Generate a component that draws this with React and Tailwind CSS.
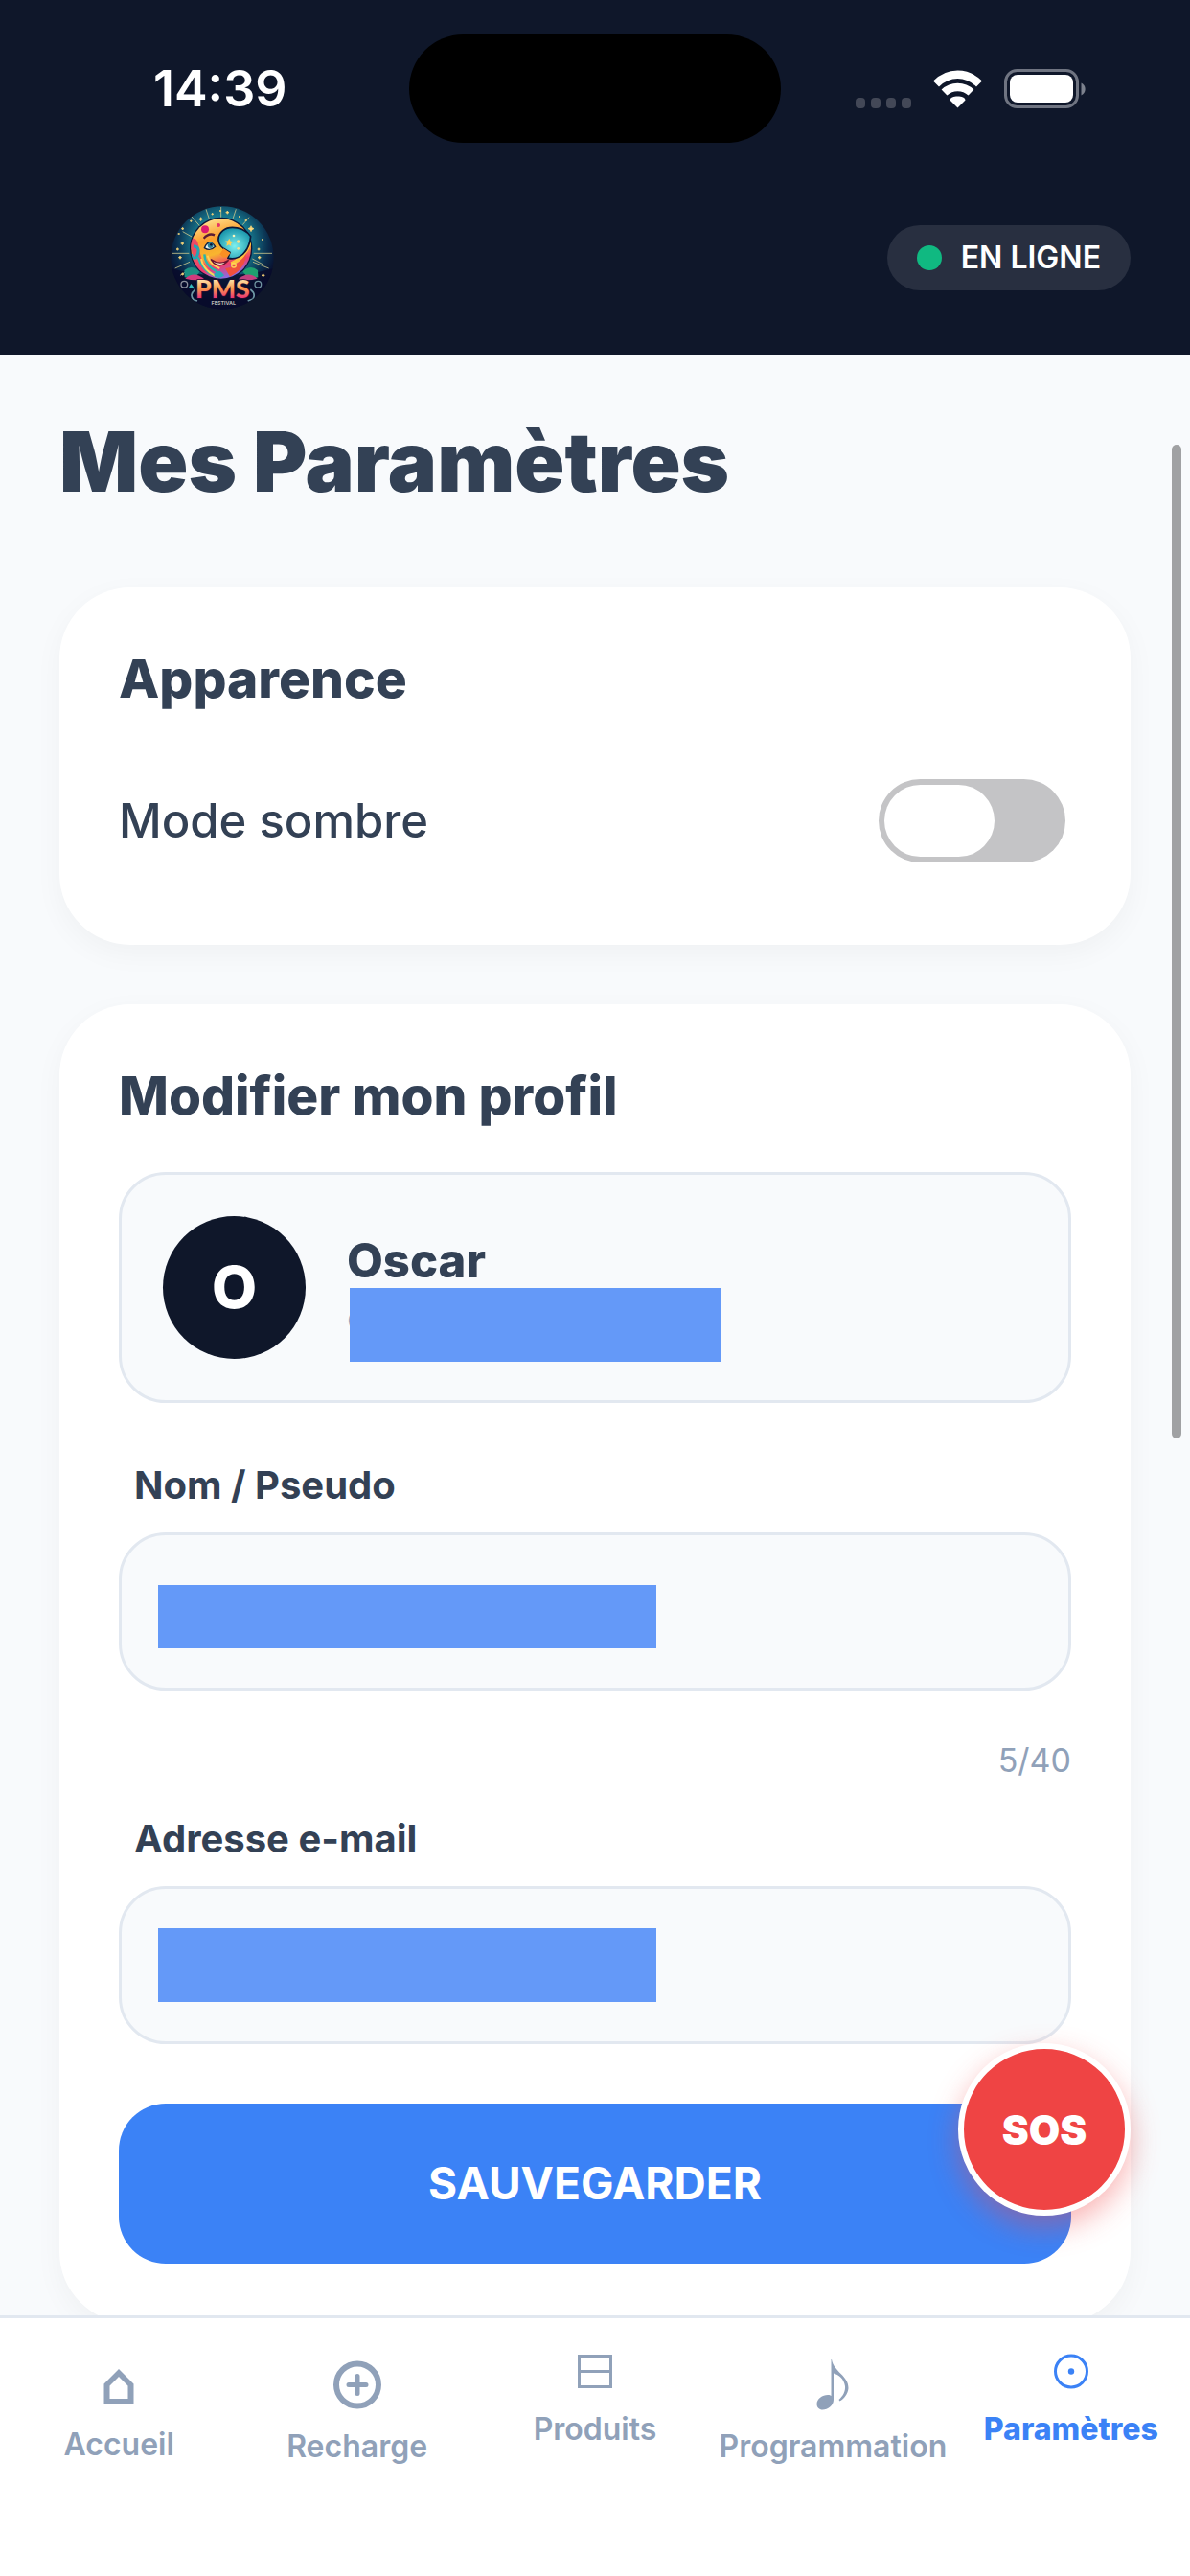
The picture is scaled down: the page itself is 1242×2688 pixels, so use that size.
import { useState } from "react";

function Wifi() {
  return (
    <svg className="h-[40px] w-[53px]" viewBox="0 0 53 40" fill="none" aria-hidden="true">
      <path d="M4 14.500 C17 1.500 36 1.500 49 14.500" stroke="white" strokeWidth="8.500" />
      <path d="M12.500 23.500 C20.500 16 32.500 16 40.500 23.500" stroke="white" strokeWidth="8.500" />
      <path d="M26.500 39.500 L18.500 31.500 C18.500 26 34.500 26 34.500 31.500 Z" fill="white" />
    </svg>
  );
}

function Battery() {
  return (
    <svg className="h-[42px] w-[86px]" viewBox="0 0 86 42" fill="none" aria-hidden="true">
      <rect x="1.500" y="1.500" width="75" height="38" rx="12" stroke="#6f7481" strokeWidth="3" />
      <rect x="6" y="6" width="66" height="29" rx="8" fill="white" />
      <path d="M80.500 14.500 C86 17 86 25 80.500 27.500 Z" fill="#7c818d" />
    </svg>
  );
}

const STARS = [
  [149, 86, 6], [232, 65, 5], [306, 116, 9], [91, 162, 5], [92, 116, 4], [185, 70, 3],
  [270, 78, 3], [290, 90, 3], [342, 150, 3], [84, 206, 5], [344, 262, 5], [80, 132, 3],
  [118, 92, 3], [332, 206, 5], [92, 258, 4], [210, 60, 3], [330, 180, 4], [76, 180, 4],
];

function Logo() {
  return (
    <svg className="h-[108px] w-[108px]" viewBox="54 45 324 324" role="img" aria-label="PMS Festival">
      <defs>
        <radialGradient id="sky" cx="0.5" cy="0.36" r="0.56">
          <stop offset="0" stopColor="#2fc4cf" />
          <stop offset="0.5" stopColor="#167389" />
          <stop offset="0.8" stopColor="#0a2c4c" />
          <stop offset="1" stopColor="#080c2b" />
        </radialGradient>
        <linearGradient id="moon" x1="0.2" y1="0" x2="0.5" y2="1">
          <stop offset="0" stopColor="#ffe79a" />
          <stop offset="0.35" stopColor="#fb9e2c" />
          <stop offset="0.6" stopColor="#f8b52f" />
          <stop offset="0.8" stopColor="#ef3d6b" />
          <stop offset="1" stopColor="#8b6be0" />
        </linearGradient>
        <radialGradient id="glow" cx="0.5" cy="0.6" r="0.6">
          <stop offset="0" stopColor="#7df0ee" />
          <stop offset="1" stopColor="#1591a8" />
        </radialGradient>
        <linearGradient id="letters" x1="0" y1="0" x2="0" y2="1">
          <stop offset="0.15" stopColor="#fff0bd" />
          <stop offset="0.5" stopColor="#fb9a4b" />
          <stop offset="0.85" stopColor="#e9287c" />
        </linearGradient>
        <clipPath id="disc"><circle cx="216" cy="207" r="161" /></clipPath>
        <clipPath id="face"><circle cx="212" cy="178" r="95" /></clipPath>
      </defs>
      <g clipPath="url(#disc)">
        <rect x="54" y="45" width="324" height="324" fill="url(#sky)" />
        <path d="M54 240 Q216 285 378 240 V369 H54 Z" fill="#080c2b" opacity="0.85" />
        <g stroke="#c9c58c" strokeWidth="2.500">
          <path d="M60 193 H112 M314 193 H372 M212 48 V84 M165 55 L176 88 M259 55 L248 88 M92 125 L122 142 M120 78 L146 108 M300 80 L280 104 M68 240 L114 220 M362 240 L312 220 M84 262 L120 240 M344 228 L310 210" />
        </g>
        {STARS.map(([x, y, r]) => (
          <path
            key={`${x}-${y}`}
            d={`M${x} ${y - r} L${x + r / 3} ${y - r / 3} L${x + r} ${y} L${x + r / 3} ${y + r / 3} L${x} ${y + r} L${x - r / 3} ${y + r / 3} L${x - r} ${y} L${x - r / 3} ${y - r / 3} Z`}
            fill="#ffd97a"
            stroke="#ffd97a"
            strokeWidth="2"
          />
        ))}
        <path d="M97 246 Q120 226 146 250 Q132 276 98 268 Z" fill="#1b8f83" />
        <path d="M100 272 Q128 246 160 274 Q130 280 100 272 Z" fill="#d03a7d" />
        <path d="M327 246 Q304 226 280 250 Q296 276 328 268 Z" fill="#1fa06f" />
        <path d="M326 272 Q298 246 266 274 Q298 280 326 272 Z" fill="#c2417f" />
        <circle cx="212" cy="178" r="98" fill="#0b1738" />
        <circle cx="212" cy="178" r="94" fill="url(#moon)" />
        <g clipPath="url(#face)">
          <path d="M114 150 C150 130 138 200 160 225 C180 248 150 270 130 240 Z" fill="#e93772" opacity="0.8" />
          <path d="M126 170 Q150 172 136 204 Q124 214 118 196" fill="none" stroke="#22a6b5" strokeWidth="9" />
          <path d="M140 205 Q152 245 190 262 M160 196 Q162 232 200 250" fill="none" stroke="#27b3ad" strokeWidth="7" />
          <path d="M150 210 Q158 250 205 268 M170 200 Q176 226 208 240" fill="none" stroke="#ffd257" strokeWidth="6" />
          <path d="M190 258 Q206 236 222 262 Q208 276 192 266" fill="#29a8bb" />
          <path d="M225 240 Q262 236 290 196 Q290 240 240 266 Z" fill="#f0513c" />
          <path d="M244 226 Q282 210 303 160" fill="none" stroke="#ffc23d" strokeWidth="12" />
        </g>
        <path d="M305 140 C286 112 240 104 218 122 C196 140 202 166 220 178 L240 190 L234 208 C268 216 300 190 305 140 Z" fill="url(#glow)" stroke="#0b1738" strokeWidth="5" />
        <path d="M220 178 L242 192 L232 204 L220 206 L208 196 Z" fill="#f98f23" />
        <circle cx="162" cy="118" r="12" fill="#dc1b6f" />
        <circle cx="204" cy="105" r="6" fill="#e63267" />
        <circle cx="252" cy="230" r="7" fill="none" stroke="#ffd257" strokeWidth="4" />
        <path d="M158 146 Q174 128 192 136" fill="none" stroke="#5a1c35" strokeWidth="7" />
        <path d="M160 176 Q174 144 194 172 Q178 188 160 176 Z" fill="#e7f7f5" stroke="#12203f" strokeWidth="4" />
        <circle cx="179" cy="168" r="9" fill="#2a7f9b" />
        <circle cx="181" cy="166" r="4" fill="#0b1738" />
        <path d="M180 212 Q208 232 236 214 Q214 240 190 224 Z" fill="#fff0d0" stroke="#6a1430" strokeWidth="4" />
        <path d="M238 146 L242 155 L251 157 L243 163 L244 171 L237 166 L229 170 L231 161 L225 155 L234 154 Z" fill="#ffcf56" />
        <circle cx="252" cy="138" r="4" fill="#f4f3bd" />
        <circle cx="266" cy="156" r="5" fill="#f7e08a" />
        <circle cx="266" cy="178" r="4" fill="#f7e08a" />
        <circle cx="97" cy="290" r="10" fill="none" stroke="#8b8f9b" strokeWidth="4" />
        <circle cx="328" cy="290" r="10" fill="none" stroke="#6f93a0" strokeWidth="4" />
        <path d="M118 288 L130 304 L110 302 Z" fill="#35b8bd" />
        <path d="M130 308 Q112 322 126 338 L138 342 M304 306 Q322 320 312 336 L296 342" fill="none" stroke="#6e98a5" strokeWidth="5" />
        <text x="217" y="333" textAnchor="middle" fontFamily="Lato, sans-serif" fontWeight="900" fontSize="80" fill="url(#letters)" stroke="#2a0c2f" strokeWidth="5" paintOrder="stroke">PMS</text>
        <text x="220" y="354" textAnchor="middle" fontFamily="Inter, sans-serif" fontWeight="700" fontSize="16" fill="#b9b6b0">FESTIVAL</text>
      </g>
    </svg>
  );
}

function HomeIcon() {
  return (
    <svg className="h-[89px] w-[60px]" viewBox="0 0 60 89" fill="none" aria-hidden="true">
      <path fillRule="evenodd" fill="currentColor" d="M30 28 L45.500 43.500 V64 H14.500 V43.500 Z M30 36 L20.500 45.500 V59 H39.500 V45.500 Z" />
    </svg>
  );
}

function RechargeIcon() {
  return (
    <svg className="h-[91px] w-[60px]" viewBox="0 0 60 91" fill="none" stroke="currentColor" aria-hidden="true">
      <circle cx="30" cy="44.500" r="22" strokeWidth="6" />
      <path d="M30 35.500 V53.500 M21 44.500 H39" strokeWidth="5" strokeLinecap="round" />
    </svg>
  );
}

function ProductsIcon() {
  return (
    <svg className="h-[73px] w-[60px]" viewBox="0 0 60 73" fill="none" stroke="currentColor" strokeWidth="3" aria-hidden="true">
      <path d="M13.500 14.500 H46.500 V46.500 H13.500 Z M13.500 30.500 H46.500" />
    </svg>
  );
}

function NoteIcon() {
  return (
    <svg className="h-[91px] w-[60px]" viewBox="0 0 60 91" fill="currentColor" aria-hidden="true">
      <path d="M29 18 C31 31 47 35 46.500 48 C46 54 42 59 37.500 61.500 L36.500 60 C41 56 43.500 51 43 46 C42 38 36 34 31 32.500 V60 C31 66 25 70.500 19.500 70.500 C16 70.500 13.500 68 13.500 64.500 C13.500 59 19.500 55 25 55 C26.500 55 28 55.500 28.500 56 V18 Z" />
    </svg>
  );
}

function SettingsIcon() {
  return (
    <svg className="h-[73px] w-[60px]" viewBox="0 0 60 73" fill="none" aria-hidden="true">
      <circle cx="30" cy="30.500" r="16.500" stroke="currentColor" strokeWidth="3" />
      <circle cx="30" cy="30.500" r="3.200" fill="currentColor" />
    </svg>
  );
}

const TABS = [
  { label: "Accueil", Icon: HomeIcon },
  { label: "Recharge", Icon: RechargeIcon },
  { label: "Produits", Icon: ProductsIcon },
  { label: "Programmation", Icon: NoteIcon },
  { label: "Paramètres", Icon: SettingsIcon, active: true },
];

const CARD = "rounded-[74px] bg-white px-[62px] pt-[62px] shadow-[0_9px_31px_rgba(0,0,0,0.04)]";
const FIELD = "h-[165px] w-full rounded-[49px] border-3 border-slate-200 bg-slate-50 px-[41px] text-[46px] text-slate-700";

export default function App() {
  const [dark, setDark] = useState(false);
  return (
    <div className="flex h-screen flex-col bg-slate-50 font-['Inter',sans-serif] text-[#334155]">
      <header className="shrink-0 bg-[#0f172a] pt-[36px] text-white">
        <div className="grid h-[113px] grid-cols-[1fr_388px_1fr] items-center">
          <div className="pl-[160px] text-[52px] leading-[60px] font-semibold">14:39</div>
          <div className="h-[113px] rounded-full bg-black" />
          <div className="flex items-center justify-end gap-[22px] pr-[108px]">
            <div className="flex gap-[6px] pt-[30px]">
              {[0, 1, 2, 3].map((i) => (
                <span key={i} className="h-[11px] w-[10px] rounded-[4px] bg-[#434857]" />
              ))}
            </div>
            <Wifi />
            <Battery />
          </div>
        </div>
        <div className="flex items-center justify-between pt-[66px] pr-[62px] pb-[47px] pl-[178px]">
          <Logo />
          <div className="flex h-[68px] items-center gap-[20px] rounded-full bg-[#282f40] px-[31px] text-[32px] font-semibold">
            <span className="h-[26px] w-[26px] rounded-full bg-[#10b981]" />
            EN LIGNE
          </div>
        </div>
      </header>

      <div className="relative min-h-0 flex-1">
        <main className="h-full overflow-y-auto px-[62px] pt-[62px] [scrollbar-width:none]">
          <h1 className="mb-[80px] text-[86px] leading-[101px] font-black">Mes Paramètres</h1>

          <section className={`${CARD} pb-[86px]`}>
            <h2 className="text-[55px] leading-[66px] font-extrabold">Apparence</h2>
            <div className="mt-[72px] flex items-center justify-between pr-[6px]">
              <label htmlFor="dark" className="text-[49px] leading-[60px] font-medium">Mode sombre</label>
              <input
                id="dark"
                type="checkbox"
                role="switch"
                checked={dark}
                onChange={(e) => setDark(e.target.checked)}
                className="flex h-[87px] w-[195px] appearance-none items-center rounded-full bg-[#c4c4c6] px-[6px] before:h-[75px] before:w-[115px] before:rounded-full before:bg-white before:content-[''] checked:justify-end checked:bg-blue-500"
              />
            </div>
          </section>

          <section className={`${CARD} mt-[62px] pb-[62px]`}>
            <h2 className="text-[55px] leading-[66px] font-extrabold">Modifier mon profil</h2>
            <div className="mt-[47px] flex items-center gap-[43px] rounded-[49px] border-3 border-slate-200 bg-slate-50 p-[43px]">
              <div className="flex h-[149px] w-[149px] items-center justify-center rounded-full bg-[#0f172a] text-[61px] font-extrabold text-white">O</div>
              <div>
                <p className="text-[49px] leading-[54px] font-extrabold">Oscar</p>
                <div className="relative mt-[8px] text-[40px] leading-[48px] text-slate-400">
                  o
                  <span className="absolute -top-[7px] left-[3px] h-[77px] w-[388px] bg-[#6499f8]" />
                </div>
              </div>
            </div>

            <label htmlFor="name" className="mt-[62px] block pl-[16px] text-[40px] leading-[48px] font-bold">Nom / Pseudo</label>
            <div className="relative mt-[25px] flex">
              <input id="name" type="text" maxLength={40} className={FIELD} />
              <span className="absolute top-[55px] left-[41px] h-[66px] w-[520px] bg-[#6499f8]" />
            </div>
            <p className="mt-[52px] text-right text-[34px] leading-[42px] text-slate-400">5/40</p>

            <label htmlFor="email" className="mt-[37px] block pl-[16px] text-[40px] leading-[48px] font-bold">Adresse e-mail</label>
            <div className="relative mt-[25px] flex">
              <input id="email" type="email" className={FIELD} />
              <span className="absolute top-[44px] left-[41px] h-[77px] w-[520px] bg-[#6499f8]" />
            </div>

            <button type="button" className="mt-[62px] h-[167px] w-full rounded-[49px] bg-[#3b82f6] text-[46px] font-bold text-white">
              SAUVEGARDER
            </button>
          </section>
        </main>

        <div className="absolute top-[94px] right-[9px] h-[1037px] w-[10px] rounded-full bg-[#a0a1a3]" />
        <button type="button" className="absolute right-[62px] bottom-[104px] h-[180px] w-[180px] rounded-full border-6 border-white bg-[#ef4444] text-[42px] font-black text-white shadow-[0_12px_30px_rgba(239,68,68,0.4)]">
          SOS
        </button>
      </div>

      <nav className="grid h-[272px] shrink-0 grid-cols-5 items-start border-t-3 border-slate-200 bg-white pt-[25px]">
        {TABS.map(({ label, Icon, active }) => (
          <a
            key={label}
            href={`#${label}`}
            aria-current={active ? "page" : undefined}
            className={`flex flex-col items-center text-[32px] leading-[36px] ${active ? "font-extrabold text-[#3b82f6]" : "font-semibold text-slate-400"}`}
          >
            <Icon />
            {label}
          </a>
        ))}
      </nav>
    </div>
  );
}
